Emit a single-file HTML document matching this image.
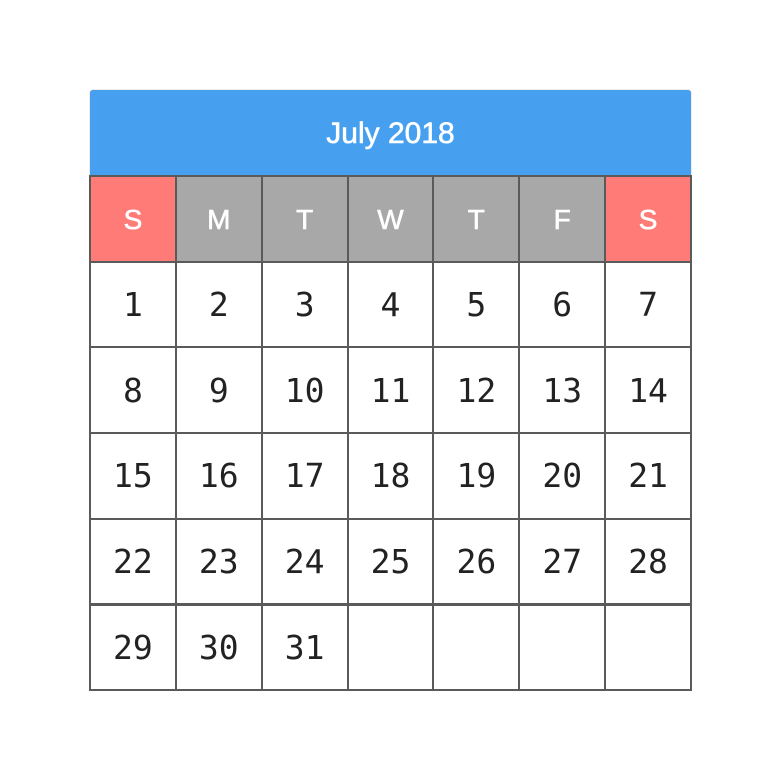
<!DOCTYPE html>
<html><head><style>
body{margin:0;width:781px;height:781px;background:#fff;position:relative;overflow:hidden}
.h{position:absolute;left:90px;top:90px;width:601px;height:86px;background:#46a0ef;border-radius:3px 3px 0 0;box-shadow:0 0 1px #888;color:#fff;font:30px "Liberation Sans",sans-serif;-webkit-text-stroke:0.6px #fff;text-align:center;line-height:88px}
.c{position:absolute;box-sizing:border-box;border:2px solid #5a5a5a;display:flex;align-items:center;justify-content:center}
.d{color:#fff;font:28px "Liberation Sans",sans-serif;-webkit-text-stroke:0.6px #fff;background:#a8a8a8;padding-top:3px}
.w{background:#fe7b77}
.n{font:33px "DejaVu Sans Mono","Liberation Mono",monospace;color:#222;background:#fff}
</style></head><body>
<div class="h">July 2018</div>
<div id="g"></div>
<script>
var g=document.getElementById('g'),h='';
var L=90,W=601/7,T=176,H=85.7;
var days=['S','M','T','W','T','F','S'];
function cell(r,c,cls,t){var x=L+c*W,y=T+r*H;h+='<div class="c '+cls+'" style="left:'+(x-1)+'px;top:'+(y-1)+'px;width:'+(W+2)+'px;height:'+(H+2)+'px">'+t+'</div>';}
for(var c=0;c<7;c++)cell(0,c,'d'+(c==0||c==6?' w':''),days[c]);
for(var i=0;i<35;i++){var d=i+1;cell(1+Math.floor(i/7),i%7,'n',d<=31?d:'');}
g.innerHTML=h;
</script>
</body></html>
